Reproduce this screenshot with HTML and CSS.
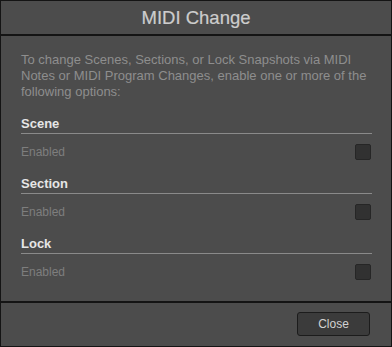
FILE: index.html
```html
<!DOCTYPE html>
<html>
<head>
<meta charset="utf-8">
<link rel="stylesheet" href="styles.css">
</head>
<body>
<div class="dialog">
  <div class="titlebar">MIDI Change</div>
  <div class="content">
    <p class="desc">To change Scenes, Sections, or Lock Snapshots via MIDI Notes or MIDI Program Changes, enable one or more of the following options:</p>
    <div class="group">
      <div class="heading">Scene</div>
      <div class="row"><span class="label">Enabled</span><span class="check"></span></div>
    </div>
    <div class="group">
      <div class="heading">Section</div>
      <div class="row"><span class="label">Enabled</span><span class="check"></span></div>
    </div>
    <div class="group">
      <div class="heading">Lock</div>
      <div class="row"><span class="label">Enabled</span><span class="check"></span></div>
    </div>
  </div>
  <div class="footer">
    <button class="btn">Close</button>
  </div>
</div>
</body>
</html>
```
FILE: styles.css
```css
html, body {
  margin: 0;
  padding: 0;
  background: #141414;
}
.dialog {
  width: 392px;
  height: 347px;
  box-sizing: border-box;
  border: 1px solid #141414;
  background: #141414;
  display: flex;
  flex-direction: column;
  gap: 2px;
  font-family: "Liberation Sans", Arial, sans-serif;
}
.titlebar {
  height: 33px;
  background: #4c4c4c;
  color: #cdcdcd;
  font-size: 18.5px;
  line-height: 33px;
  text-align: center;
  -webkit-text-stroke: 0.2px #cdcdcd;
}
.content {
  height: 265px;
  box-sizing: border-box;
  background: #4c4c4c;
  padding: 16px 19px 0 20px;
}
.desc {
  margin: 0;
  font-size: 13px;
  line-height: 16px;
  color: #8e8e8e;
}
.group {
  margin-top: 14px;
}
.heading {
  height: 19px;
  line-height: 19px;
  font-size: 13px;
  font-weight: bold;
  color: #e6e6e6;
  border-bottom: 1px solid #8a8a8a;
}
.row {
  display: flex;
  align-items: center;
  justify-content: space-between;
  height: 16px;
  margin-top: 10px;
}
.label {
  font-size: 12px;
  color: #7e7e7e;
}
.check {
  width: 16px;
  height: 16px;
  box-sizing: border-box;
  background: #313131;
  border: 1px solid #262626;
  border-radius: 2px;
  margin-right: 1px;
}
.footer {
  height: 43px;
  background: #4c4c4c;
  display: flex;
  justify-content: flex-end;
  align-items: flex-start;
  padding: 9px 21px 0 0;
  box-sizing: border-box;
}
.btn {
  width: 73px;
  height: 24px;
  background: #3b3b3b;
  border: 1px solid #1c1c1c;
  border-radius: 3px;
  color: #d2d2d2;
  font-family: "Liberation Sans", Arial, sans-serif;
  font-size: 12px;
  padding: 0;
}
```
